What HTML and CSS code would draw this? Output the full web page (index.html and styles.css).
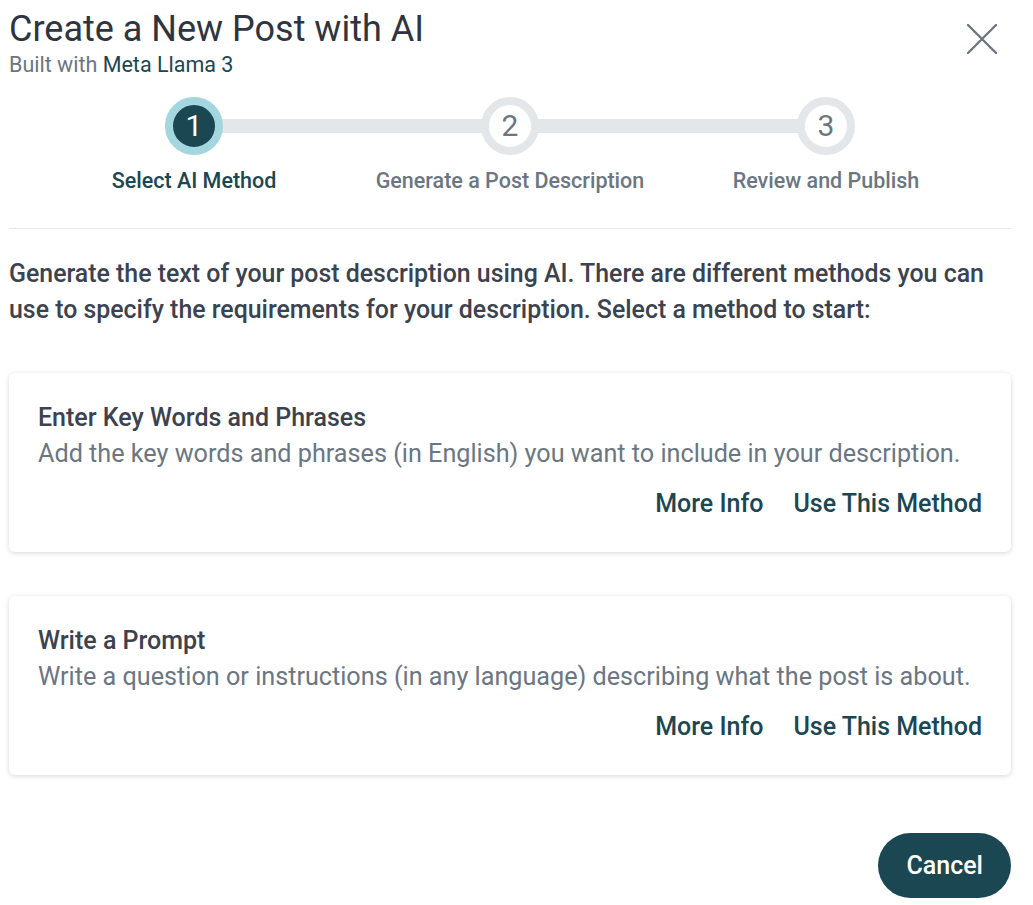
FILE: index.html
```html
<!DOCTYPE html>
<html lang="en">
<head>
    <meta charset="UTF-8">
    <meta name="viewport" content="width=device-width, initial-scale=1.0">
    <title>Create a New Post with AI</title>
    <link rel="stylesheet" href="styles.css">
</head>
<body>

<div class="modal">
    <div class="header">
        <div>
            <h1>Create a New Post with AI</h1>
            <div class="subtitle">Built with <span class="brand">Meta Llama 3</span></div>
        </div>
        <button class="close" aria-label="Close">
            <svg width="30" height="30" viewBox="0 0 30 30">
                <path d="M1 1 L29 29 M29 1 L1 29" stroke="#6b7683" stroke-width="2.4" stroke-linecap="round" fill="none"/>
            </svg>
        </button>
    </div>

    <div class="stepper">
        <div class="step active">
            <div class="circle">1</div>
            <div class="step-label">Select AI Method</div>
        </div>
        <div class="step">
            <div class="circle">2</div>
            <div class="step-label">Generate a Post Description</div>
        </div>
        <div class="step">
            <div class="circle">3</div>
            <div class="step-label">Review and Publish</div>
        </div>
    </div>

    <hr class="divider">

    <p class="intro">Generate the text of your post description using AI. There are different methods you can use to specify the requirements for your description. Select a method to start:</p>

    <div class="card">
        <div class="card-title">Enter Key Words and Phrases</div>
        <div class="card-text">Add the key words and phrases (in English) you want to include in your description.</div>
        <div class="card-actions">
            <a href="#" class="link">More Info</a>
            <a href="#" class="link">Use This Method</a>
        </div>
    </div>

    <div class="card">
        <div class="card-title">Write a Prompt</div>
        <div class="card-text">Write a question or instructions (in any language) describing what the post is about.</div>
        <div class="card-actions">
            <a href="#" class="link">More Info</a>
            <a href="#" class="link">Use This Method</a>
        </div>
    </div>

    <div class="footer">
        <button class="cancel">Cancel</button>
    </div>
</div>

</body>
</html>
```

FILE: styles.css
```css
body {
    font-family: Roboto, "Liberation Sans", Arial, sans-serif;
    background-color: #ffffff;
    margin: 0;
    padding: 0;
    color: #343b45;
}
.modal {
    width: 1002px;
    padding: 7px 0 0 9px;
}
.header {
    display: flex;
    justify-content: space-between;
    align-items: flex-start;
}
h1 {
    margin: 0;
    font-size: 36px;
    font-weight: 400;
    line-height: 45px;
    color: #2e3540;
}
.subtitle {
    font-size: 21.5px;
    line-height: 26px;
    color: #6b7683;
}
.brand {
    color: #1b4752;
}
.close {
    background: none;
    border: none;
    padding: 0;
    margin: 17px 14px 0 0;
    cursor: pointer;
    width: 30px;
    height: 30px;
}
.stepper {
    display: grid;
    grid-template-columns: repeat(3, 316px);
    justify-content: center;
    margin-top: 19px;
}
.step {
    position: relative;
    display: flex;
    flex-direction: column;
    align-items: center;
}
.step:not(:last-child)::after {
    content: "";
    position: absolute;
    top: 22px;
    left: 50%;
    width: 100%;
    height: 14px;
    background: #e3e7ea;
}
.circle {
    position: relative;
    z-index: 1;
    width: 42px;
    height: 42px;
    border: 8px solid #e3e7ea;
    border-radius: 50%;
    background: #ffffff;
    color: #6b7683;
    font-size: 30px;
    line-height: 42px;
    text-align: center;
}
.step.active .circle {
    background: #1b4752;
    border-color: #a3d6df;
    color: #ffffff;
}
.step-label {
    margin-top: 12px;
    font-size: 21.5px;
    font-weight: 500;
    line-height: 28px;
    color: #6b7683;
}
.step.active .step-label {
    color: #1b4752;
}
.divider {
    border: none;
    border-top: 1px solid #e5e8eb;
    margin: 33px 0 0 0;
}
.intro {
    margin: 27px 0 45px 0;
    font-size: 24.9px;
    font-weight: 500;
    line-height: 36px;
    color: #3b4250;
}
.card {
    background: #ffffff;
    border-radius: 6px;
    box-shadow: 0 1px 5px rgba(0, 0, 0, 0.16);
    padding: 27px 29px 30px 29px;
    margin-bottom: 44px;
}
.card-title {
    font-size: 25px;
    font-weight: 500;
    line-height: 36px;
    color: #3b4250;
}
.card-text {
    font-size: 25.2px;
    line-height: 36px;
    color: #6b7683;
}
.card-actions {
    display: flex;
    justify-content: flex-end;
    gap: 30px;
    margin-top: 14px;
}
.link {
    font-size: 25px;
    font-weight: 500;
    line-height: 36px;
    color: #1b4752;
    text-decoration: none;
}
.footer {
    display: flex;
    justify-content: flex-end;
    margin-top: 58px;
}
.cancel {
    background-color: #1b4752;
    color: #ffffff;
    border: none;
    border-radius: 33px;
    height: 65px;
    padding: 0 28px;
    font-family: Roboto, "Liberation Sans", Arial, sans-serif;
    font-size: 25px;
    font-weight: 500;
    cursor: pointer;
}
```
